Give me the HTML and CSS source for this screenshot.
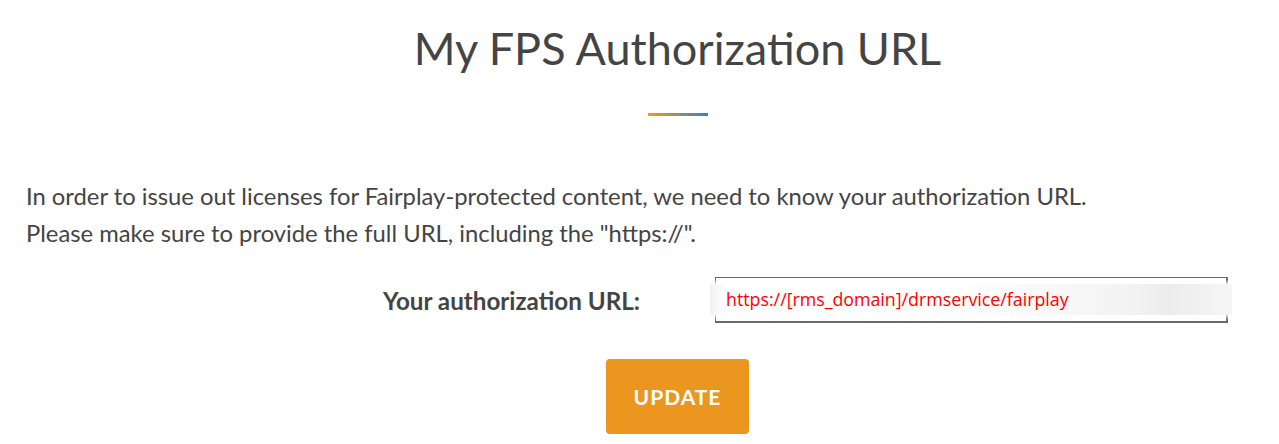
FILE: index.html
```html
<!DOCTYPE html>
<html lang="en">
<head>
    <meta charset="UTF-8">
    <meta name="viewport" content="width=device-width, initial-scale=1.0">
    <title>My FPS Authorization URL</title>
    <link rel="stylesheet" href="styles.css">
</head>
<body>
    <div class="page">
        <div class="header">
            <h1>My FPS Authorization URL</h1>
            <div class="divider"></div>
        </div>

        <p class="intro">
            In order to issue out licenses for Fairplay-protected content, we need to know your authorization URL.<br>
            Please make sure to provide the full URL, including the "https://".
        </p>

        <div class="form-row">
            <label for="auth-url">Your authorization URL:</label>
            <div class="field">
                <div class="field-box" id="auth-url"></div>
                <span class="field-value">https://[rms_domain]/drmservice/fairplay</span>
            </div>
        </div>

        <div class="actions">
            <button id="update">UPDATE</button>
        </div>
    </div>
</body>
</html>
```

FILE: styles.css
```css
body {
    margin: 0;
    background-color: #fff;
    font-family: Lato, 'Open Sans', sans-serif;
    color: #444;
    overflow: hidden;
}
.page {
    padding: 0 0 0 26px;
}
.header {
    padding: 21px 0 0 50px;
    text-align: center;
}
h1 {
    margin: 0;
    font-size: 45px;
    font-weight: 400;
    line-height: 54px;
    color: #444;
}
.divider {
    width: 60px;
    height: 3px;
    margin: 38px auto 0;
    background: linear-gradient(to right, #f29a1c, #3a7fc1);
}
.intro {
    margin: 62px 0 0;
    font-size: 23.8px;
    line-height: 37px;
    color: #444;
}
.form-row {
    display: grid;
    grid-template-columns: 614px 513px;
    column-gap: 75px;
    align-items: center;
    margin-top: 25px;
}
label {
    text-align: right;
    font-size: 24.2px;
    font-weight: 700;
    color: #444;
}
.field {
    position: relative;
    height: 46px;
}
.field-box {
    border: 1px solid #6a6a6a;
    border-right-width: 2px;
    border-bottom-width: 2px;
    box-sizing: border-box;
    height: 46px;
}
.field-value {
    position: absolute;
    left: -5px;
    right: -4px;
    top: 7px;
    height: 31px;
    padding-left: 16px;
    box-sizing: border-box;
    line-height: 31px;
    font-family: 'Open Sans', 'Noto Sans', sans-serif;
    font-size: 17.8px;
    color: #f00;
    background: linear-gradient(to right, #f1f1f1, #fff 3%, #fff 45%, #f3f3f3 80%, #ececec 88%, #f6f6f6 100%);
    box-shadow: 0 0 4px 2px rgba(255, 255, 255, 0.9);
}
.actions {
    padding-left: 50px;
    text-align: center;
    margin-top: 36px;
}
button {
    width: 143px;
    height: 75px;
    border: none;
    border-radius: 4px;
    background-color: #ea961f;
    color: #fff;
    font-family: Lato, sans-serif;
    font-size: 21px;
    font-weight: 700;
    letter-spacing: 1px;
    cursor: pointer;
}
```
